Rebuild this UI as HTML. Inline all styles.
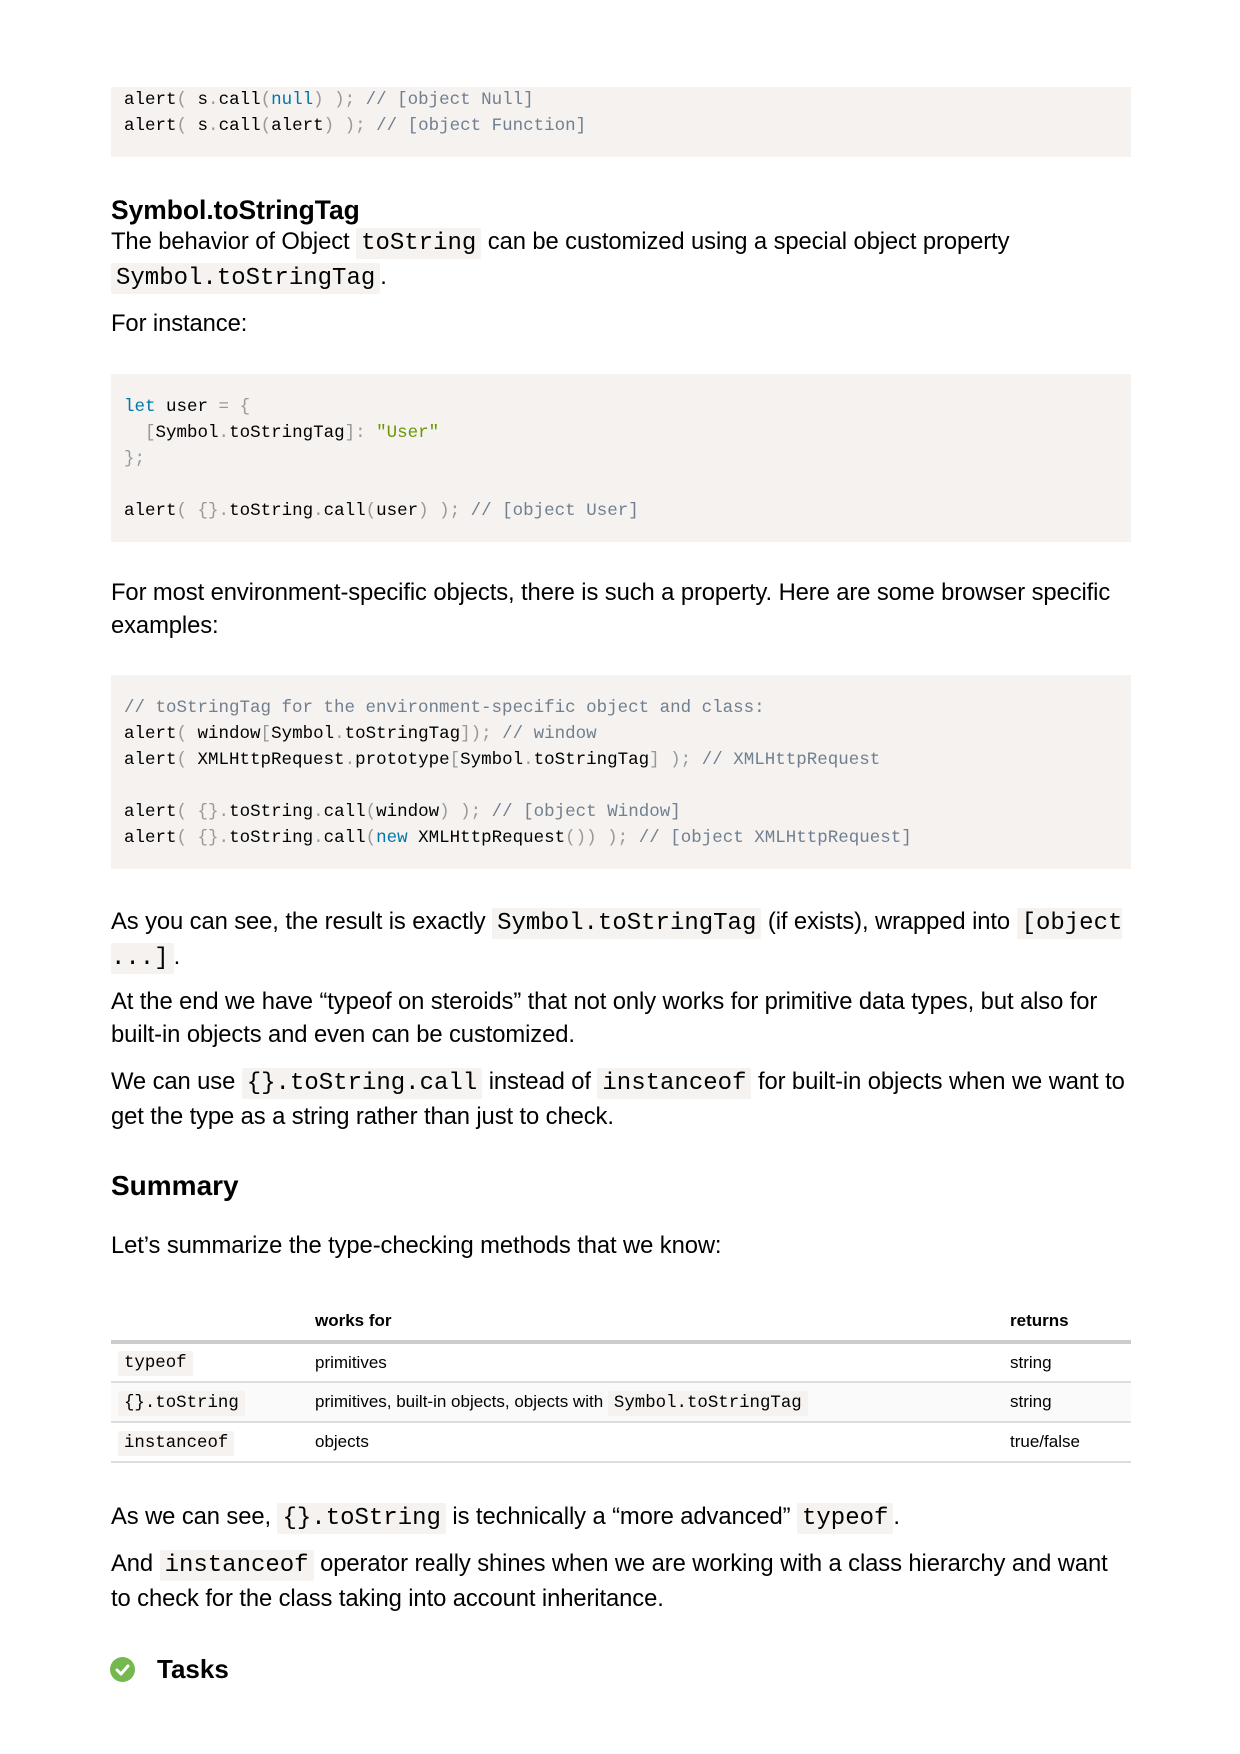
<!DOCTYPE html>
<html><head><meta charset="utf-8"><style>
*{margin:0;padding:0;box-sizing:border-box}
body{width:1240px;height:1754px;background:#fff;position:relative;font-family:"Liberation Sans",Arial,sans-serif;color:#000;overflow:hidden}
.a{position:absolute;left:111px;width:1022px}
p.a{font-size:23.8px;line-height:33px;letter-spacing:-0.1px}
code{font-family:"Liberation Mono",monospace;font-size:24px;background:#f5f2f0;padding:2px 5px;border-radius:2px;letter-spacing:0}
.pre{position:absolute;left:111px;width:1020px;background:#f5f2f0;font-family:"Liberation Mono",monospace;font-size:17.5px;line-height:26px;padding-left:13px;white-space:pre;color:#000}
.k{color:#0077aa}.s{color:#669900}.p{color:#999}.c{color:#708090}
table{position:absolute;left:111px;top:1302px;width:1020px;border-collapse:collapse;font-size:17px}
th{text-align:left;font-weight:bold;height:40px;border-bottom:4px solid #ccc;vertical-align:middle}
td{height:40px;border-bottom:2px solid #ddd;vertical-align:middle}
td code,th code{font-size:17.4px;padding:3px 6px}
tr.z td{background:#fafafa}
</style></head><body>

<div class="pre" style="top:87px;height:70px;padding-top:0"><div style="position:absolute;top:0px;left:13px">alert<span class="p">(</span> s<span class="p">.</span>call<span class="p">(</span><span class="k">null</span><span class="p">) );</span> <span class="c">// [object Null]</span>
alert<span class="p">(</span> s<span class="p">.</span>call<span class="p">(</span>alert<span class="p">) );</span> <span class="c">// [object Function]</span></div></div>

<div class="a" style="top:195px;font-size:26.4px;font-weight:bold;line-height:30px">Symbol.toStringTag</div>
<p class="a" style="top:225px">The behavior of Object <code>toString</code> can be customized using a special object property<br><code>Symbol.toStringTag</code>.</p>
<p class="a" style="top:307px">For instance:</p>

<div class="pre" style="top:374px;height:168px"><div style="position:absolute;top:20px;left:13px"><span class="k">let</span> user <span class="p">=</span> <span class="p">{</span>
  <span class="p">[</span>Symbol<span class="p">.</span>toStringTag<span class="p">]:</span> <span class="s">"User"</span>
<span class="p">};</span>

alert<span class="p">(</span> <span class="p">{}.</span>toString<span class="p">.</span>call<span class="p">(</span>user<span class="p">) );</span> <span class="c">// [object User]</span></div></div>

<p class="a" style="top:576px">For most environment-specific objects, there is such a property. Here are some browser specific examples:</p>

<div class="pre" style="top:675px;height:194px"><div style="position:absolute;top:20px;left:13px"><span class="c">// toStringTag for the environment-specific object and class:</span>
alert<span class="p">(</span> window<span class="p">[</span>Symbol<span class="p">.</span>toStringTag<span class="p">]);</span> <span class="c">// window</span>
alert<span class="p">(</span> XMLHttpRequest<span class="p">.</span>prototype<span class="p">[</span>Symbol<span class="p">.</span>toStringTag<span class="p">] );</span> <span class="c">// XMLHttpRequest</span>

alert<span class="p">(</span> <span class="p">{}.</span>toString<span class="p">.</span>call<span class="p">(</span>window<span class="p">) );</span> <span class="c">// [object Window]</span>
alert<span class="p">(</span> <span class="p">{}.</span>toString<span class="p">.</span>call<span class="p">(</span><span class="k">new</span> XMLHttpRequest<span class="p">()) );</span> <span class="c">// [object XMLHttpRequest]</span></div></div>

<p class="a" style="top:905px">As you can see, the result is exactly <code>Symbol.toStringTag</code> (if exists), wrapped into <code>[object<br>...]</code>.</p>
<p class="a" style="top:985px">At the end we have “typeof on steroids” that not only works for primitive data types, but also for<br>built-in objects and even can be customized.</p>
<p class="a" style="top:1065px">We can use <code>{}.toString.call</code> instead of <code>instanceof</code> for built-in objects when we want to<br>get the type as a string rather than just to check.</p>

<div class="a" style="top:1170px;font-size:28px;font-weight:bold;line-height:32px">Summary</div>
<p class="a" style="top:1229px">Let’s summarize the type-checking methods that we know:</p>

<table>
<tr><th style="width:204px"></th><th style="width:695px">works for</th><th>returns</th></tr>
<tr><td style="padding-left:7px"><code>typeof</code></td><td>primitives</td><td>string</td></tr>
<tr class="z"><td style="padding-left:7px"><code>{}.toString</code></td><td>primitives, built-in objects, objects with <code>Symbol.toStringTag</code></td><td>string</td></tr>
<tr><td style="padding-left:7px"><code>instanceof</code></td><td>objects</td><td>true/false</td></tr>
</table>

<p class="a" style="top:1500px">As we can see, <code>{}.toString</code> is technically a “more advanced” <code>typeof</code>.</p>
<p class="a" style="top:1547px">And <code>instanceof</code> operator really shines when we are working with a class hierarchy and want<br>to check for the class taking into account inheritance.</p>

<svg style="position:absolute;left:110px;top:1657px" width="25" height="25" viewBox="0 0 25 25"><circle cx="12.5" cy="12.5" r="12.5" fill="#75b84f"/><path d="M7 13l4 4 7-8" fill="none" stroke="#fff" stroke-width="3" stroke-linecap="round" stroke-linejoin="round"/></svg>
<div style="position:absolute;left:157px;top:1653px;font-size:26px;font-weight:bold;line-height:32px">Tasks</div>
</body></html>
